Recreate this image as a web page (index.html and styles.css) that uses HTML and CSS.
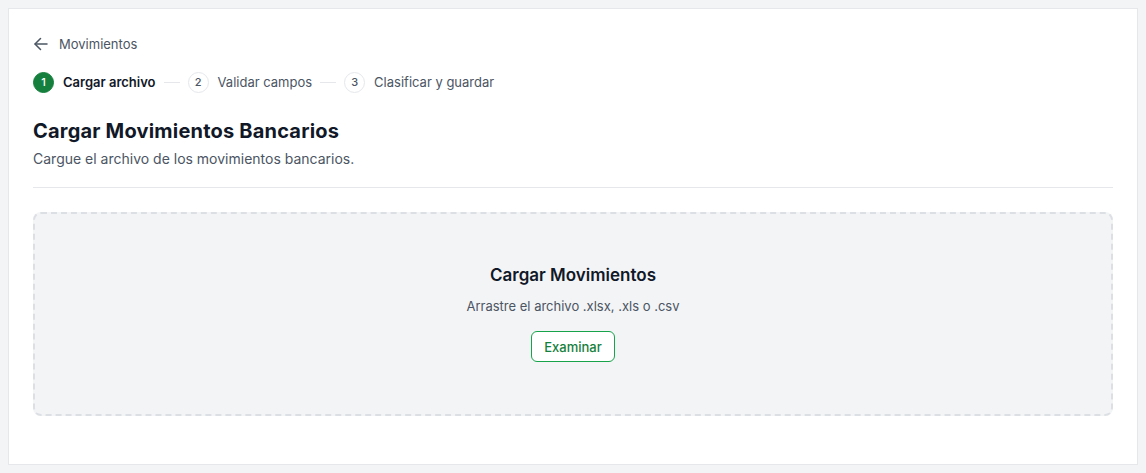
FILE: index.html
```html
<!DOCTYPE html>
<html lang="es">
<head>
<meta charset="utf-8">
<title>Cargar Movimientos Bancarios</title>
<link rel="stylesheet" href="styles.css">
</head>
<body>
<div class="card">
  <a class="back" href="#">
    <svg class="back-icon" width="14" height="14" viewBox="0 0 14 14" fill="none" stroke="currentColor" stroke-width="1.5" stroke-linecap="round" stroke-linejoin="round"><path d="M13 7H1.2"/><path d="M6.5 12.5L1 7l5.5-5.5"/></svg>
    <span>Movimientos</span>
  </a>
  <ol class="steps">
    <li class="step active"><span class="dot">1</span><span class="label">Cargar archivo</span></li>
    <li class="sep"></li>
    <li class="step"><span class="dot">2</span><span class="label">Validar campos</span></li>
    <li class="sep"></li>
    <li class="step"><span class="dot">3</span><span class="label">Clasificar y guardar</span></li>
  </ol>
  <h1 class="title">Cargar Movimientos Bancarios</h1>
  <p class="subtitle">Cargue el archivo de los movimientos bancarios.</p>
  <hr class="divider">
  <div class="dropzone">
    <h2 class="dz-title">Cargar Movimientos</h2>
    <p class="dz-text">Arrastre el archivo .xlsx, .xls o .csv</p>
    <button class="btn" type="button">Examinar</button>
  </div>
</div>
</body>
</html>
```

FILE: styles.css
```css
* { box-sizing: border-box; }
html, body { margin: 0; padding: 0; }
body {
  background: #f3f4f6;
  padding: 8px;
  font-family: Inter, "Noto Sans", sans-serif;
  color: #111827;
  -webkit-font-smoothing: antialiased;
}
.card {
  background: #ffffff;
  border: 1px solid #e5e7eb;
  padding: 25px 24px 48px 24px;
  height: 457px;
}
.back {
  display: flex;
  align-items: center;
  gap: 11px;
  height: 20px;
  color: #4b5563;
  text-decoration: none;
  font-size: 13px;
  margin-left: 1px;
}
.back-icon { color: #4b5563; }
.steps {
  list-style: none;
  margin: 17px 0 0 0;
  padding: 0;
  display: flex;
  align-items: center;
  height: 22px;
}
.step {
  display: flex;
  align-items: center;
  gap: 9px;
}
.dot {
  width: 21px;
  height: 21px;
  border-radius: 50%;
  border: 1px solid #e5e7eb;
  background: #ffffff;
  color: #4b5563;
  font-size: 11px;
  font-weight: 500;
  display: flex;
  align-items: center;
  justify-content: center;
}
.step.active .dot {
  background: #15803d;
  border-color: #15803d;
  color: #ffffff;
}
.label {
  font-size: 13px;
  color: #4b5563;
}
.step.active .label {
  color: #111827;
  font-weight: 600;
}
.sep {
  width: 16px;
  height: 1px;
  background: #e5e7eb;
  margin: 0 8px;
}
.title {
  margin: 24px 0 0 0;
  font-size: 20px;
  line-height: 28px;
  font-weight: 700;
  letter-spacing: 0.2px;
  color: #111827;
}
.subtitle {
  margin: 4px 0 0 0;
  font-size: 14px;
  line-height: 20px;
  color: #4b5563;
}
.divider {
  border: 0;
  border-top: 1px solid #e5e7eb;
  margin: 18px 0 0 0;
}
.dropzone {
  margin-top: 24px;
  border: 2px dashed #dcdfe4;
  border-radius: 8px;
  background: #f3f4f6;
  height: 204px;
  display: flex;
  flex-direction: column;
  align-items: center;
  padding-top: 49px;
}
.dz-title {
  margin: 0;
  font-size: 17px;
  line-height: 24px;
  font-weight: 600;
  color: #111827;
}
.dz-text {
  margin: 9px 0 0 0;
  font-size: 13px;
  line-height: 20px;
  color: #4b5563;
}
.btn {
  margin-top: 15px;
  height: 31px;
  padding: 0 12px;
  border: 1px solid #16a34a;
  border-radius: 6px;
  background: #ffffff;
  color: #15803d;
  font-family: Inter, "Noto Sans", sans-serif;
  font-size: 13px;
  font-weight: 500;
}
```
